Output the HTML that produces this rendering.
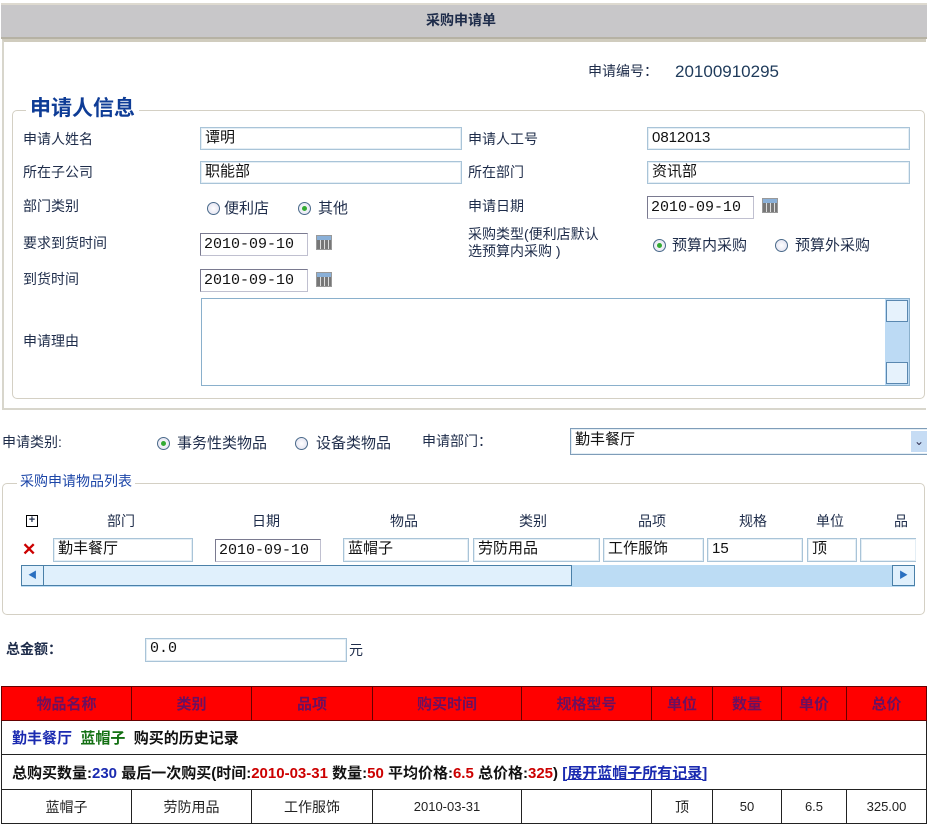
<!DOCTYPE html>
<html><head><meta charset="utf-8"><style>
body{margin:0;width:927px;height:823px;position:relative;background:#fff;overflow:hidden;font-family:"Liberation Sans","Noto Sans CJK SC",sans-serif;font-size:14px;color:#1e2c4a}
.a{position:absolute;white-space:nowrap;line-height:1}
.in{position:absolute;border:1px solid #a9c4d8;box-shadow:inset 0 0 0 1px #e4eef5;background:#fff;height:23px;box-sizing:border-box;padding:1px 4px 0;line-height:18px;font-size:15px;color:#111;white-space:nowrap;overflow:hidden}
.dt{position:absolute;border:1px solid #7f9db9;border-color:#7a7a90 #c0c0d0 #c0c0d0 #7a7a90;background:#fff;height:23px;box-sizing:border-box;padding:2px 3px 0;line-height:18px;font-family:"Liberation Mono",monospace;font-size:15px;color:#111}
.cal{position:absolute;width:16px;height:15px;background:linear-gradient(#8ab0d8 0 4px,transparent 4px),repeating-linear-gradient(90deg,#777 0 3px,#ddd 3px 4px);border:1px solid #999;box-sizing:border-box}
.rd{position:absolute;width:13px;height:13px;border:1px solid #4a6a8a;border-radius:50%;background:radial-gradient(#fff,#dde);box-sizing:border-box}
.rd.on::after{content:"";position:absolute;left:3px;top:3px;width:5px;height:5px;border-radius:50%;background:#3a3}
table{position:absolute;border-collapse:collapse;left:1px;top:686px;width:926px}
td{border:1px solid #222;text-align:center;font-size:13px;padding:0;color:#222}
tr.h td{background:#f00;color:#6a1060;font-weight:bold;font-size:15px;height:33px;border-color:#600}
</style></head><body>
<div style="position:absolute;left:1px;top:3px;width:926px;height:32px;background:#c8c7c9;border-top:2px solid #dedad0;border-bottom:2px solid #b6b2a4"></div>
<div class="a" style="left:426px;top:13px;font-weight:bold;font-size:14px;color:#1e2c4a">采购申请单</div>
<div style="position:absolute;left:2px;top:39px;width:922px;height:366px;border:2px solid #d8d6cc;border-right:none;border-top:3px solid #d0ccbe"></div>
<div class="a" style="left:588px;top:64px">申请编号：</div>
<div class="a" style="left:675px;top:63px;font-size:17px;font-family:'Liberation Sans',sans-serif;color:#1e3a5a">20100910295</div>
<div style="position:absolute;left:12px;top:110px;width:911px;height:287px;border:1px solid #d4d0c4;border-radius:5px"></div>
<div class="a" style="left:26px;top:98px;background:#fff;padding:0 4px;font-size:21px;font-weight:bold;color:#0e3c96">申请人信息</div>
<div class="a" style="left:23px;top:132px">申请人姓名</div>
<div class="in" style="left:200px;top:127px;width:262px">谭明</div>
<div class="a" style="left:468px;top:132px">申请人工号</div>
<div class="in" style="left:647px;top:127px;width:263px">0812013</div>
<div class="a" style="left:23px;top:165px">所在子公司</div>
<div class="in" style="left:200px;top:161px;width:262px">职能部</div>
<div class="a" style="left:468px;top:165px">所在部门</div>
<div class="in" style="left:647px;top:161px;width:263px">资讯部</div>
<div class="a" style="left:23px;top:199px">部门类别</div>
<div class="rd" style="left:207px;top:202px"></div><div class="a" style="left:224px;top:201px;font-size:15px">便利店</div>
<div class="rd on" style="left:298px;top:202px"></div><div class="a" style="left:318px;top:201px;font-size:15px">其他</div>
<div class="a" style="left:468px;top:199px">申请日期</div>
<div class="dt" style="left:647px;top:196px;width:107px">2010-09-10</div><div class="cal" style="left:762px;top:198px"></div>
<div class="a" style="left:23px;top:236px">要求到货时间</div>
<div class="dt" style="left:200px;top:233px;width:108px">2010-09-10</div><div class="cal" style="left:316px;top:235px"></div>
<div class="a" style="left:468px;top:226px;line-height:17px">采购类型(便利店默认<br>选预算内采购 )</div>
<div class="rd on" style="left:653px;top:239px"></div><div class="a" style="left:672px;top:238px;font-size:15px">预算内采购</div>
<div class="rd" style="left:775px;top:239px"></div><div class="a" style="left:795px;top:238px;font-size:15px">预算外采购</div>
<div class="a" style="left:23px;top:272px">到货时间</div>
<div class="dt" style="left:200px;top:269px;width:108px">2010-09-10</div><div class="cal" style="left:316px;top:272px"></div>
<div class="a" style="left:23px;top:334px">申请理由</div>
<div style="position:absolute;left:201px;top:298px;width:709px;height:88px;border:1px solid #8ab0cc;box-sizing:border-box"></div>
<div style="position:absolute;left:885px;top:299px;width:24px;height:86px;background:#bcdaf4"></div>
<div style="position:absolute;left:886px;top:300px;width:20px;height:20px;border:1px solid #5a88b0;background:#e6f2fc"></div>
<div style="position:absolute;left:886px;top:362px;width:20px;height:20px;border:1px solid #5a88b0;background:#e6f2fc"></div>
<div class="a" style="left:2px;top:435px">申请类别:</div>
<div class="rd on" style="left:157px;top:437px"></div><div class="a" style="left:177px;top:436px;font-size:15px">事务性类物品</div>
<div class="rd" style="left:295px;top:437px"></div><div class="a" style="left:316px;top:436px;font-size:15px">设备类物品</div>
<div class="a" style="left:422px;top:434px">申请部门：</div>
<div class="in" style="left:570px;top:428px;width:360px;height:27px;border-color:#7f9db9;padding-top:2px">勤丰餐厅</div>
<div style="position:absolute;left:911px;top:431px;width:16px;height:21px;background:#c6dcf4;color:#335;font-size:12px;text-align:center;line-height:21px">⌄</div>
<div style="position:absolute;left:2px;top:483px;width:921px;height:130px;border:1px solid #d4d0c4;border-radius:5px"></div>
<div class="a" style="left:17px;top:474px;background:#fff;padding:0 3px;font-size:14px;color:#1c46a8">采购申请物品列表</div>
<div style="position:absolute;left:26px;top:515px;width:10px;height:10px;border:1px solid #000;font-size:11px;line-height:9px;text-align:center;font-weight:bold">+</div>
<div class="a" style="left:107px;top:514px">部门</div>
<div class="a" style="left:252px;top:514px">日期</div>
<div class="a" style="left:390px;top:514px">物品</div>
<div class="a" style="left:519px;top:514px">类别</div>
<div class="a" style="left:638px;top:514px">品项</div>
<div class="a" style="left:739px;top:514px">规格</div>
<div class="a" style="left:816px;top:514px">单位</div>
<div class="a" style="left:894px;top:514px">品</div>
<div class="a" style="left:22px;top:541px;color:#c00;font-weight:bold;font-size:17px">✕</div>
<div class="in" style="left:53px;top:538px;width:140px;height:24px">勤丰餐厅</div>
<div class="dt" style="left:215px;top:539px;width:106px">2010-09-10</div>
<div class="in" style="left:343px;top:538px;width:126px;height:24px">蓝帽子</div>
<div class="in" style="left:473px;top:538px;width:127px;height:24px">劳防用品</div>
<div class="in" style="left:603px;top:538px;width:101px;height:24px">工作服饰</div>
<div class="in" style="left:707px;top:538px;width:96px;height:24px">15</div>
<div class="in" style="left:807px;top:538px;width:50px;height:24px">顶</div>
<div class="in" style="left:860px;top:538px;width:56px;height:24px;border-right:none"></div>
<div style="position:absolute;left:21px;top:565px;width:894px;height:22px;background:#bcdcf4"></div>
<div style="position:absolute;left:21px;top:565px;width:551px;height:21px;border:1px solid #4a80a8;background:#e0f0fc;box-sizing:border-box"></div>
<div style="position:absolute;left:21px;top:565px;width:23px;height:21px;border:1px solid #4a80a8;box-sizing:border-box;color:#2a70c0;font-size:9px;line-height:19px;text-align:center">◀</div>
<div style="position:absolute;left:892px;top:565px;width:23px;height:21px;border:1px solid #4a80a8;box-sizing:border-box;background:#e0f0fc;color:#2a70c0;font-size:9px;line-height:19px;text-align:center">▶</div>
<div class="a" style="left:6px;top:642px;font-weight:bold">总金额：</div>
<div class="in" style="left:145px;top:638px;width:202px;height:24px;font-family:'Liberation Mono',monospace">0.0</div>
<div class="a" style="left:349px;top:643px">元</div>
<table>
<tr class="h"><td style="width:129px">物品名称</td><td style="width:119px">类别</td><td style="width:120px">品项</td><td style="width:148px">购买时间</td><td style="width:129px">规格型号</td><td style="width:60px">单位</td><td style="width:68px">数量</td><td style="width:64px">单价</td><td>总价</td></tr>
<tr><td colspan="9" style="text-align:left;height:33px;padding-left:10px;font-weight:bold;font-size:15px"><span style="color:#1a2ab0">勤丰餐厅</span>&nbsp; <span style="color:#137013">蓝帽子</span>&nbsp; <span style="color:#111">购买的历史记录</span></td></tr>
<tr><td colspan="9" style="text-align:left;height:34px;padding-left:10px;font-weight:bold;font-size:15px;color:#111">总购买数量:<span style="color:#1a2ab0">230</span> 最后一次购买(时间:<span style="color:#c00">2010-03-31</span> 数量:<span style="color:#c00">50</span> 平均价格:<span style="color:#c00">6.5</span> 总价格:<span style="color:#c00">325</span>) <span style="color:#1a2ab0;text-decoration:underline">[展开蓝帽子所有记录]</span></td></tr>
<tr><td style="height:33px;font-size:14px">蓝帽子</td><td style="font-size:14px">劳防用品</td><td style="font-size:14px">工作服饰</td><td>2010-03-31</td><td></td><td style="font-size:14px">顶</td><td>50</td><td>6.5</td><td>325.00</td></tr>
</table>
</body></html>
